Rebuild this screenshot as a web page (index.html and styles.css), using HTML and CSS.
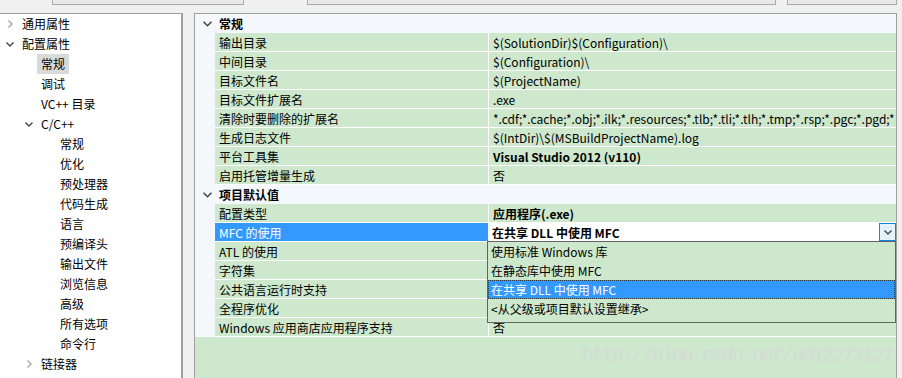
FILE: index.html
```html
<!DOCTYPE html>
<html lang="zh-CN">
<head>
    <meta charset="UTF-8">
    <title>属性页</title>
    <link rel="stylesheet" href="styles.css">
</head>
<body>
    <div class="tabs">
        <div class="tab tab-1"></div>
        <div class="tab tab-2"></div>
        <div class="tab tab-3"></div>
    </div>

    <div class="main">
        <div class="tree">
            <div class="ti lv0"><svg class="chev" viewBox="0 0 8 8"><polyline class="closed" points="2.5,0.5 6,4 2.5,7.5"/></svg><span>通用属性</span></div>
            <div class="ti lv0"><svg class="chev" viewBox="0 0 8 8"><polyline points="0.5,2.5 4,6 7.5,2.5"/></svg><span>配置属性</span></div>
            <div class="ti lv1 leaf"><span class="lbl current">常规</span></div>
            <div class="ti lv1 leaf"><span>调试</span></div>
            <div class="ti lv1 leaf"><span>VC++ 目录</span></div>
            <div class="ti lv1"><svg class="chev" viewBox="0 0 8 8"><polyline points="0.5,2.5 4,6 7.5,2.5"/></svg><span>C/C++</span></div>
            <div class="ti lv2"><span>常规</span></div>
            <div class="ti lv2"><span>优化</span></div>
            <div class="ti lv2"><span>预处理器</span></div>
            <div class="ti lv2"><span>代码生成</span></div>
            <div class="ti lv2"><span>语言</span></div>
            <div class="ti lv2"><span>预编译头</span></div>
            <div class="ti lv2"><span>输出文件</span></div>
            <div class="ti lv2"><span>浏览信息</span></div>
            <div class="ti lv2"><span>高级</span></div>
            <div class="ti lv2"><span>所有选项</span></div>
            <div class="ti lv2"><span>命令行</span></div>
            <div class="ti lv1"><svg class="chev" viewBox="0 0 8 8"><polyline class="closed" points="2.5,0.5 6,4 2.5,7.5"/></svg><span>链接器</span></div>
        </div>

        <div class="grid">
            <div class="row hdr">
                <div class="gut"><svg class="chev" viewBox="0 0 8 8"><polyline points="0.5,2.5 4,6 7.5,2.5"/></svg></div>
                <div class="title">常规</div>
            </div>
            <div class="row"><div class="gut"></div><div class="name">输出目录</div><div class="val">$(SolutionDir)$(Configuration)\</div></div>
            <div class="row"><div class="gut"></div><div class="name">中间目录</div><div class="val">$(Configuration)\</div></div>
            <div class="row"><div class="gut"></div><div class="name">目标文件名</div><div class="val">$(ProjectName)</div></div>
            <div class="row"><div class="gut"></div><div class="name">目标文件扩展名</div><div class="val">.exe</div></div>
            <div class="row"><div class="gut"></div><div class="name">清除时要删除的扩展名</div><div class="val">*.cdf;*.cache;*.obj;*.ilk;*.resources;*.tlb;*.tli;*.tlh;*.tmp;*.rsp;*.pgc;*.pgd;*</div></div>
            <div class="row"><div class="gut"></div><div class="name">生成日志文件</div><div class="val">$(IntDir)\$(MSBuildProjectName).log</div></div>
            <div class="row"><div class="gut"></div><div class="name">平台工具集</div><div class="val bold">Visual Studio 2012 (v110)</div></div>
            <div class="row"><div class="gut"></div><div class="name">启用托管增量生成</div><div class="val">否</div></div>

            <div class="row hdr">
                <div class="gut"><svg class="chev" viewBox="0 0 8 8"><polyline points="0.5,2.5 4,6 7.5,2.5"/></svg></div>
                <div class="title">项目默认值</div>
            </div>
            <div class="row"><div class="gut"></div><div class="name">配置类型</div><div class="val bold">应用程序(.exe)</div></div>
            <div class="row">
                <div class="gut"></div>
                <div class="name sel">MFC 的使用</div>
                <div class="val combo">
                    <span class="bold">在共享 DLL 中使用 MFC</span>
                    <span class="drop-btn"><svg class="chev" viewBox="0 0 8 8"><polyline points="0.5,2.5 4,6 7.5,2.5"/></svg></span>
                    <div class="list">
                        <div class="opt">使用标准 Windows 库</div>
                        <div class="opt">在静态库中使用 MFC</div>
                        <div class="opt hi">在共享 DLL 中使用 MFC</div>
                        <div class="opt">&lt;从父级或项目默认设置继承&gt;</div>
                    </div>
                </div>
            </div>
            <div class="row"><div class="gut"></div><div class="name">ATL 的使用</div><div class="val"></div></div>
            <div class="row"><div class="gut"></div><div class="name">字符集</div><div class="val"></div></div>
            <div class="row"><div class="gut"></div><div class="name">公共语言运行时支持</div><div class="val"></div></div>
            <div class="row"><div class="gut"></div><div class="name">全程序优化</div><div class="val"></div></div>
            <div class="row"><div class="gut"></div><div class="name">Windows 应用商店应用程序支持</div><div class="val">否</div></div>
        </div>
    </div>

    <div class="watermark">http://blog.csdn.net/u012273127</div>
</body>
</html>
```

FILE: styles.css
```css
body { margin: 0; width: 902px; height: 378px; overflow: hidden; position: relative; background: #f0f0f0; font-family: "Noto Sans CJK SC", "Noto Sans", sans-serif; font-size: 12px; color: #000; }

.tabs { display: flex; height: 13px; }
.tab { height: 4px; border: 1px solid #acacac; border-top: none; background: #e9e9e9; }
.tab-1 { margin-left: 52px; width: 190px; }
.tab-2 { margin-left: 63px; width: 467px; }
.tab-3 { margin-left: 11px; width: 108px; }

.main { display: flex; height: 365px; }

.tree { box-sizing: border-box; width: 184px; margin-left: -1px; border: 1px solid #a0a0a0; border-right-width: 2px; border-bottom: none; background: #fff; }
.ti { display: flex; align-items: center; height: 20px; line-height: 20px; white-space: nowrap; }
.ti .chev { width: 8px; height: 8px; margin: 0 8px 0 4px; flex: none; }
.lv0 { padding-left: 2px; }
.lv1 { padding-left: 21px; }
.lv1.leaf, .lv2 { padding-left: 41px; }
.lv2 { padding-left: 60px; }
.lbl.current { background: #d9d9d9; padding: 0 4px; margin-left: -4px; height: 20px; }

.chev polyline { fill: none; stroke: #444; stroke-width: 1.4; }
.chev polyline.closed { stroke: #a8a8a8; }

.grid { box-sizing: border-box; width: 703px; margin-left: 11px; border: 1px solid #a0a0a0; border-bottom: none; background: #cde8cd; }
.row { display: flex; height: 19px; line-height: 19px; white-space: nowrap; }
.gut { width: 20px; flex: none; background: #f4f7fc; display: flex; align-items: center; justify-content: center; }
.gut .chev { width: 9px; height: 9px; margin-left: 4px; }
.name { box-sizing: border-box; width: 274px; flex: none; padding-left: 4px; border-bottom: 1px solid #fff; border-right: 1px solid #fff; }
.name.sel { background: #3399ff; color: #fff; }
.val { flex: 1; min-width: 0; padding-left: 4px; border-bottom: 1px solid #fff; overflow: hidden; }
.bold { font-weight: bold; }

.hdr { background: #f4f7fc; }
.hdr .title { padding-left: 4px; font-weight: bold; line-height: 20px; }

.combo { display: flex; justify-content: space-between; background: #fff; padding-left: 3px; overflow: visible; position: relative; }
.drop-btn { box-sizing: border-box; width: 17px; height: 18px; border: 1px solid #1683e0; background: #e5f1fb; display: flex; align-items: center; justify-content: center; }
.drop-btn .chev { width: 8px; height: 8px; }

.list { position: absolute; top: 18px; left: -2px; right: 0; box-sizing: border-box; height: 82px; border: 1px solid #646464; background: #cde8cd; z-index: 2; font-weight: normal; }
.opt { height: 19px; line-height: 19px; padding-left: 3px; }
.opt.hi { background: #3399ff; color: #fff; outline: 1px dotted #333; outline-offset: -1px; }

.watermark { position: absolute; left: 582px; top: 344px; font-family: "Liberation Mono", monospace; font-size: 20px; letter-spacing: -2px; color: #d6dad6; }
```
